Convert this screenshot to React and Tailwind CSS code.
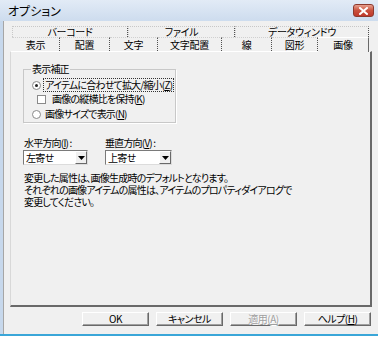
import React from "react";

const FONT = "font-['Noto_Sans_CJK_JP','Noto_Sans',sans-serif] [font-feature-settings:'palt']";

const topTabs = [
  { label: "バーコード", w: "w-[116px]" },
  { label: "ファイル", w: "w-[107px]" },
  { label: "データウィンドウ", w: "w-[134px]" },
];

const bottomTabs = [
  { label: "表示", w: "w-[48px]" },
  { label: "配置", w: "w-[50px]" },
  { label: "文字", w: "w-[48px]" },
  { label: "文字配置", w: "w-[64px]" },
  { label: "線", w: "w-[50px]" },
  { label: "図形", w: "w-[46px]" },
];

// small windows-style controls
const Radio = ({ checked }) => (
  <span className="w-[9px] h-[9px] rounded-full border border-[#8a8a8a] bg-white flex items-center justify-center shrink-0">
    {checked && <span className="w-[3px] h-[3px] rounded-full bg-[#222]" />}
  </span>
);

const Dropdown = ({ value, w }) => (
  <div className={`${w} h-[15px] flex items-center bg-white border border-t-[#7a7a7a] border-l-[#7a7a7a] border-r-[#dcdcdc] border-b-[#dcdcdc]`}>
    <span className="flex-1 pl-[2px] text-[10px] leading-none text-black">{value}</span>
    <span className="w-[12px] h-[13px] bg-[#f0f0f0] border border-t-white border-l-white border-r-[#696969] border-b-[#696969] flex items-center justify-center">
      <svg width="7" height="4" viewBox="0 0 7 4">
        <path d="M0 0h7L3.5 4z" fill="#000" />
      </svg>
    </span>
  </div>
);

const Button = ({ children, disabled }) => (
  <button
    className={`w-[67px] h-[14px] bg-[#f0f0f0] border border-t-white border-l-white border-r-[#696969] border-b-[#696969] shadow-[inset_-1px_-1px_0_#a0a0a0] text-[10px] leading-none tracking-[-0.5px] flex items-center justify-center ${
      disabled ? "text-[#a0a0a0] [text-shadow:1px_1px_0_#fff]" : "text-black"
    }`}
  >
    {children}
  </button>
);

export default function App() {
  return (
    <div className={`w-[381px] h-[340px] bg-white ${FONT}`}>
      <div className="w-[378px] h-[336px] flex flex-col bg-[#c7d8ec] border-b-2 border-[#3aa6d8]">
        {/* title bar */}
        <div className="h-[21px] flex items-center justify-between pl-[8px] pr-[4px] bg-gradient-to-b from-[#e2ebf6] to-[#cddcee]">
          <span className="text-[12px] leading-none text-black">オプション</span>
          <span className="w-[21px] h-[13px] rounded-[3px] bg-gradient-to-b from-[#e7a08f] via-[#c9513d] to-[#c0392b] border border-[#8c3a2e] flex items-center justify-center">
            <svg width="9" height="8" viewBox="0 0 9 8">
              <path d="M1 1l7 6M8 1L1 7" stroke="#fff" strokeWidth="2" strokeLinecap="square" />
            </svg>
          </span>
        </div>

        {/* body */}
        <div className="flex-1 ml-[3px] bg-[#f0f0f0] border-l border-[#a6a6a6] pt-[5px] flex flex-col">
          {/* tabs */}
          <div className="ml-[8px] flex flex-col text-[10px] leading-none text-black tracking-[-0.3px]">
            <div className="flex h-[11px]">
              {topTabs.map((t) => (
                <div
                  key={t.label}
                  className={`${t.w} flex items-center justify-center border-t border-l border-dotted border-[#c8c8c8] border-r-[#505050] border-r`}
                >
                  {t.label}
                </div>
              ))}
            </div>
            <div className="flex h-[14px] items-end">
              {bottomTabs.map((t) => (
                <div
                  key={t.label}
                  className={`${t.w} h-[14px] flex items-center justify-center border-t border-dotted border-[#d0d0d0] border-r border-r-[#505050]`}
                >
                  {t.label}
                </div>
              ))}
              <div className="w-[51px] h-[15px] -mb-[1px] bg-[#f0f0f0] flex items-center justify-center border-t border-white border-r border-r-[#696969] relative z-10">
                画像
              </div>
            </div>
          </div>

          {/* panel */}
          <div className="ml-[6px] w-[362px] h-[256px] border border-t-white border-l-[#d8d8d8] border-r-[#696969] border-b-[#696969] border-r-2 border-b-2 flex flex-col pl-[12px] text-[10px] leading-none tracking-[-0.8px] text-black whitespace-nowrap">
            {/* group box */}
            <fieldset className="mt-[12px] w-[153px] min-w-0 h-[59px] border border-[#c8c8c8] shadow-[1px_1px_0_#fff] px-[8px] pt-[1px] flex flex-col">
              <legend className="px-[1px] ml-[-1px] leading-none">表示補正</legend>
              <div className="flex items-center gap-[3px] mt-[3px]">
                <Radio checked />
                <span className="border border-dotted border-[#333] px-[1px] py-[1px] -ml-[1px]">
                  アイテムに合わせて拡大/縮小(<u>Z</u>)
                </span>
              </div>
              <div className="flex items-center gap-[6px] ml-[5px] mt-[2px]">
                <span className="w-[9px] h-[9px] bg-white border border-[#8a8a8a] shrink-0" />
                <span>
                  画像の縦横比を保持(<u>K</u>)
                </span>
              </div>
              <div className="flex items-center gap-[4px] mt-[5px]">
                <Radio />
                <span>
                  画像サイズで表示(<u>N</u>)
                </span>
              </div>
            </fieldset>

            {/* alignment selects */}
            <div className="flex gap-[17px] mt-[15px]">
              <div className="flex flex-col gap-[2px]">
                <span className="ml-[1px]">
                  水平方向(<u>I</u>) :
                </span>
                <Dropdown value="左寄せ" w="w-[65px]" />
              </div>
              <div className="flex flex-col gap-[2px]">
                <span>
                  垂直方向(<u>V</u>) :
                </span>
                <Dropdown value="上寄せ" w="w-[67px]" />
              </div>
            </div>

            <div className="mt-[7px] ml-[1px] leading-[12px]">
              <p>変更した属性は、画像生成時のデフォルトとなります。</p>
              <p>それぞれの画像アイテムの属性は、アイテムのプロパティダイアログで</p>
              <p>変更してください。</p>
            </div>
          </div>

          {/* buttons */}
          <div className="ml-[78px] mt-[5px] flex gap-[7px]">
            <Button>OK</Button>
            <Button>キャンセル</Button>
            <Button disabled>
              適用(<u>A</u>)
            </Button>
            <Button>
              ヘルプ(<u>H</u>)
            </Button>
          </div>
        </div>
      </div>
    </div>
  );
}
